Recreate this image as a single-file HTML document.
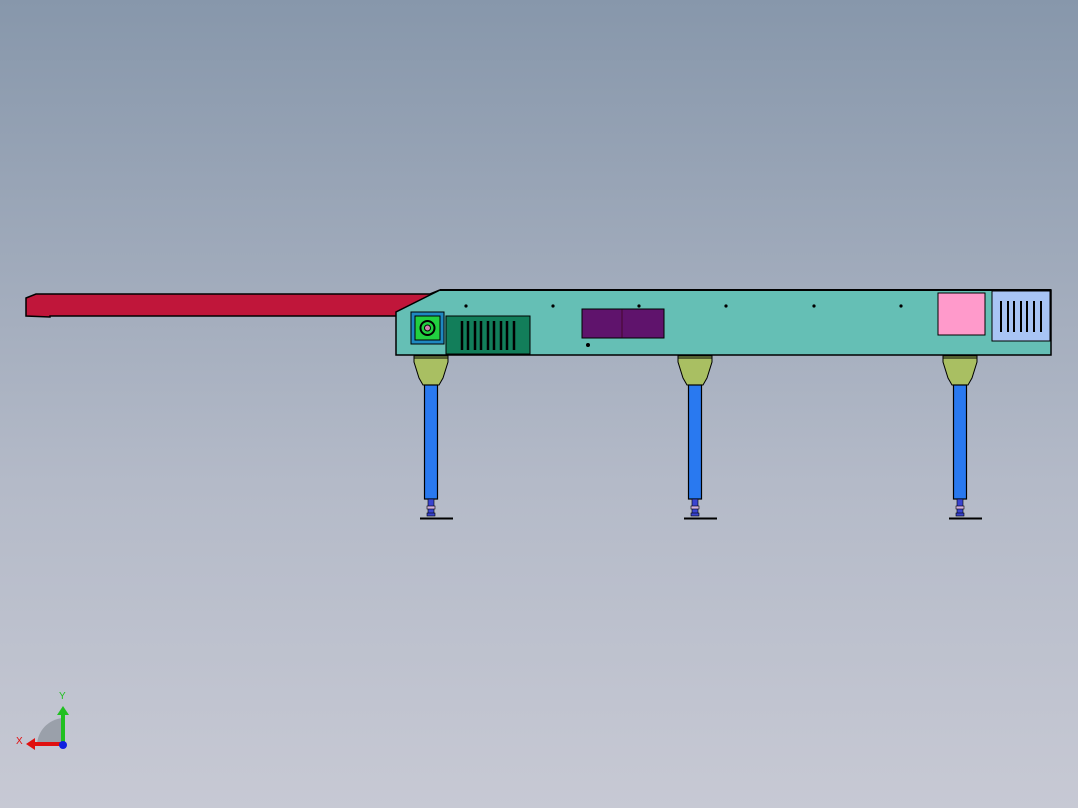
<!DOCTYPE html>
<html><head><style>html,body{margin:0;padding:0}body{width:1078px;height:808px;overflow:hidden;background:linear-gradient(#8797ab,#b4bac8 60%,#c7c9d4)}</style></head><body>
<svg width="1078" height="808" xmlns="http://www.w3.org/2000/svg" style="position:absolute;left:0;top:0">
<defs><g id="leg">
<polygon points="-17,356 17,356 17,362 12,378 8,385 -8,385 -12,378 -17,362" fill="#a9bf62" stroke="#000" stroke-width="1"/>
<line x1="-17" y1="358" x2="17" y2="358" stroke="#000"/>
<rect x="-6.5" y="385" width="13" height="114" fill="#2979f0" stroke="#000" stroke-width="1.2"/>
<rect x="-3" y="499" width="6" height="16" fill="#3a44d0" stroke="#000" stroke-width=".6"/>
<rect x="-4" y="506" width="8" height="3" fill="#d0b0e0" stroke="#000" stroke-width=".6"/>
<rect x="-4" y="513" width="8" height="3" fill="#3a44d0" stroke="#000" stroke-width=".6"/>
<line x1="-11" y1="518.5" x2="22" y2="518.5" stroke="#000" stroke-width="2"/>
</g></defs>
<polygon points="26,298 36,294 430,294 440,290 396,316 50,316 50,317 26,316" fill="#c0163a" stroke="#000" stroke-width="1.5"/>
<polygon points="440,290 1051,290 1051,355 396,355 396,312" fill="#65bfb5" stroke="#000" stroke-width="1.5"/>
<line x1="440" y1="290" x2="1051" y2="290" stroke="#000" stroke-width="2"/>
<rect x="411" y="312" width="33" height="32" fill="#1e88c0" stroke="#000"/>
<rect x="415" y="316" width="25" height="24" fill="#22d040" stroke="#000"/>
<circle cx="427.5" cy="328" r="7" fill="none" stroke="#000" stroke-width="2"/>
<circle cx="427.5" cy="328" r="3" fill="#d080b0" stroke="#000"/>
<rect x="446" y="316" width="84" height="38" fill="#127e5a" stroke="#000"/>
<g stroke="#000" stroke-width="2.5"><line x1="462" y1="321" x2="462" y2="350"/><line x1="468" y1="321" x2="468" y2="350"/><line x1="475" y1="321" x2="475" y2="350"/><line x1="481" y1="321" x2="481" y2="350"/><line x1="488" y1="321" x2="488" y2="350"/><line x1="494" y1="321" x2="494" y2="350"/><line x1="501" y1="321" x2="501" y2="350"/><line x1="507" y1="321" x2="507" y2="350"/><line x1="514" y1="321" x2="514" y2="350"/></g>
<rect x="582" y="309" width="82" height="29" fill="#5f136c" stroke="#000"/>
<line x1="622" y1="309" x2="622" y2="338" stroke="#300" stroke-width=".6"/>
<rect x="938" y="293" width="47" height="42" fill="#ff9acb" stroke="#000"/>
<rect x="992" y="291" width="58" height="50" fill="#a8c4f4" stroke="#000"/>
<g stroke="#000" stroke-width="2"><line x1="1001" y1="301" x2="1001" y2="332"/><line x1="1008" y1="301" x2="1008" y2="332"/><line x1="1014" y1="301" x2="1014" y2="332"/><line x1="1021" y1="301" x2="1021" y2="332"/><line x1="1027" y1="301" x2="1027" y2="332"/><line x1="1034" y1="301" x2="1034" y2="332"/><line x1="1041" y1="301" x2="1041" y2="332"/></g>
<g fill="#000"><circle cx="466" cy="306" r="1.6"/><circle cx="553" cy="306" r="1.6"/><circle cx="639" cy="306" r="1.6"/><circle cx="726" cy="306" r="1.6"/><circle cx="814" cy="306" r="1.6"/><circle cx="901" cy="306" r="1.6"/><circle cx="588" cy="345" r="2"/></g>
<use href="#leg" x="431"/><use href="#leg" x="695"/><use href="#leg" x="960"/>
<path d="M37,745 A28,28 0 0 1 63,718 L63,745 Z" fill="#9aa0aa"/>
<rect x="61" y="713" width="4" height="32" fill="#20c020"/><polygon points="57,715 63,706 69,715" fill="#20c020"/>
<rect x="33" y="742" width="30" height="4" fill="#e01010"/><polygon points="35,738 26,744 35,750" fill="#e01010"/>
<circle cx="63" cy="745" r="4" fill="#1020e0"/>
<text x="59" y="699" font-family="Liberation Sans,sans-serif" font-size="10" fill="#20c020">Y</text>
<text x="16" y="744" font-family="Liberation Sans,sans-serif" font-size="10" fill="#e01010">X</text>
</svg>
</body></html>
